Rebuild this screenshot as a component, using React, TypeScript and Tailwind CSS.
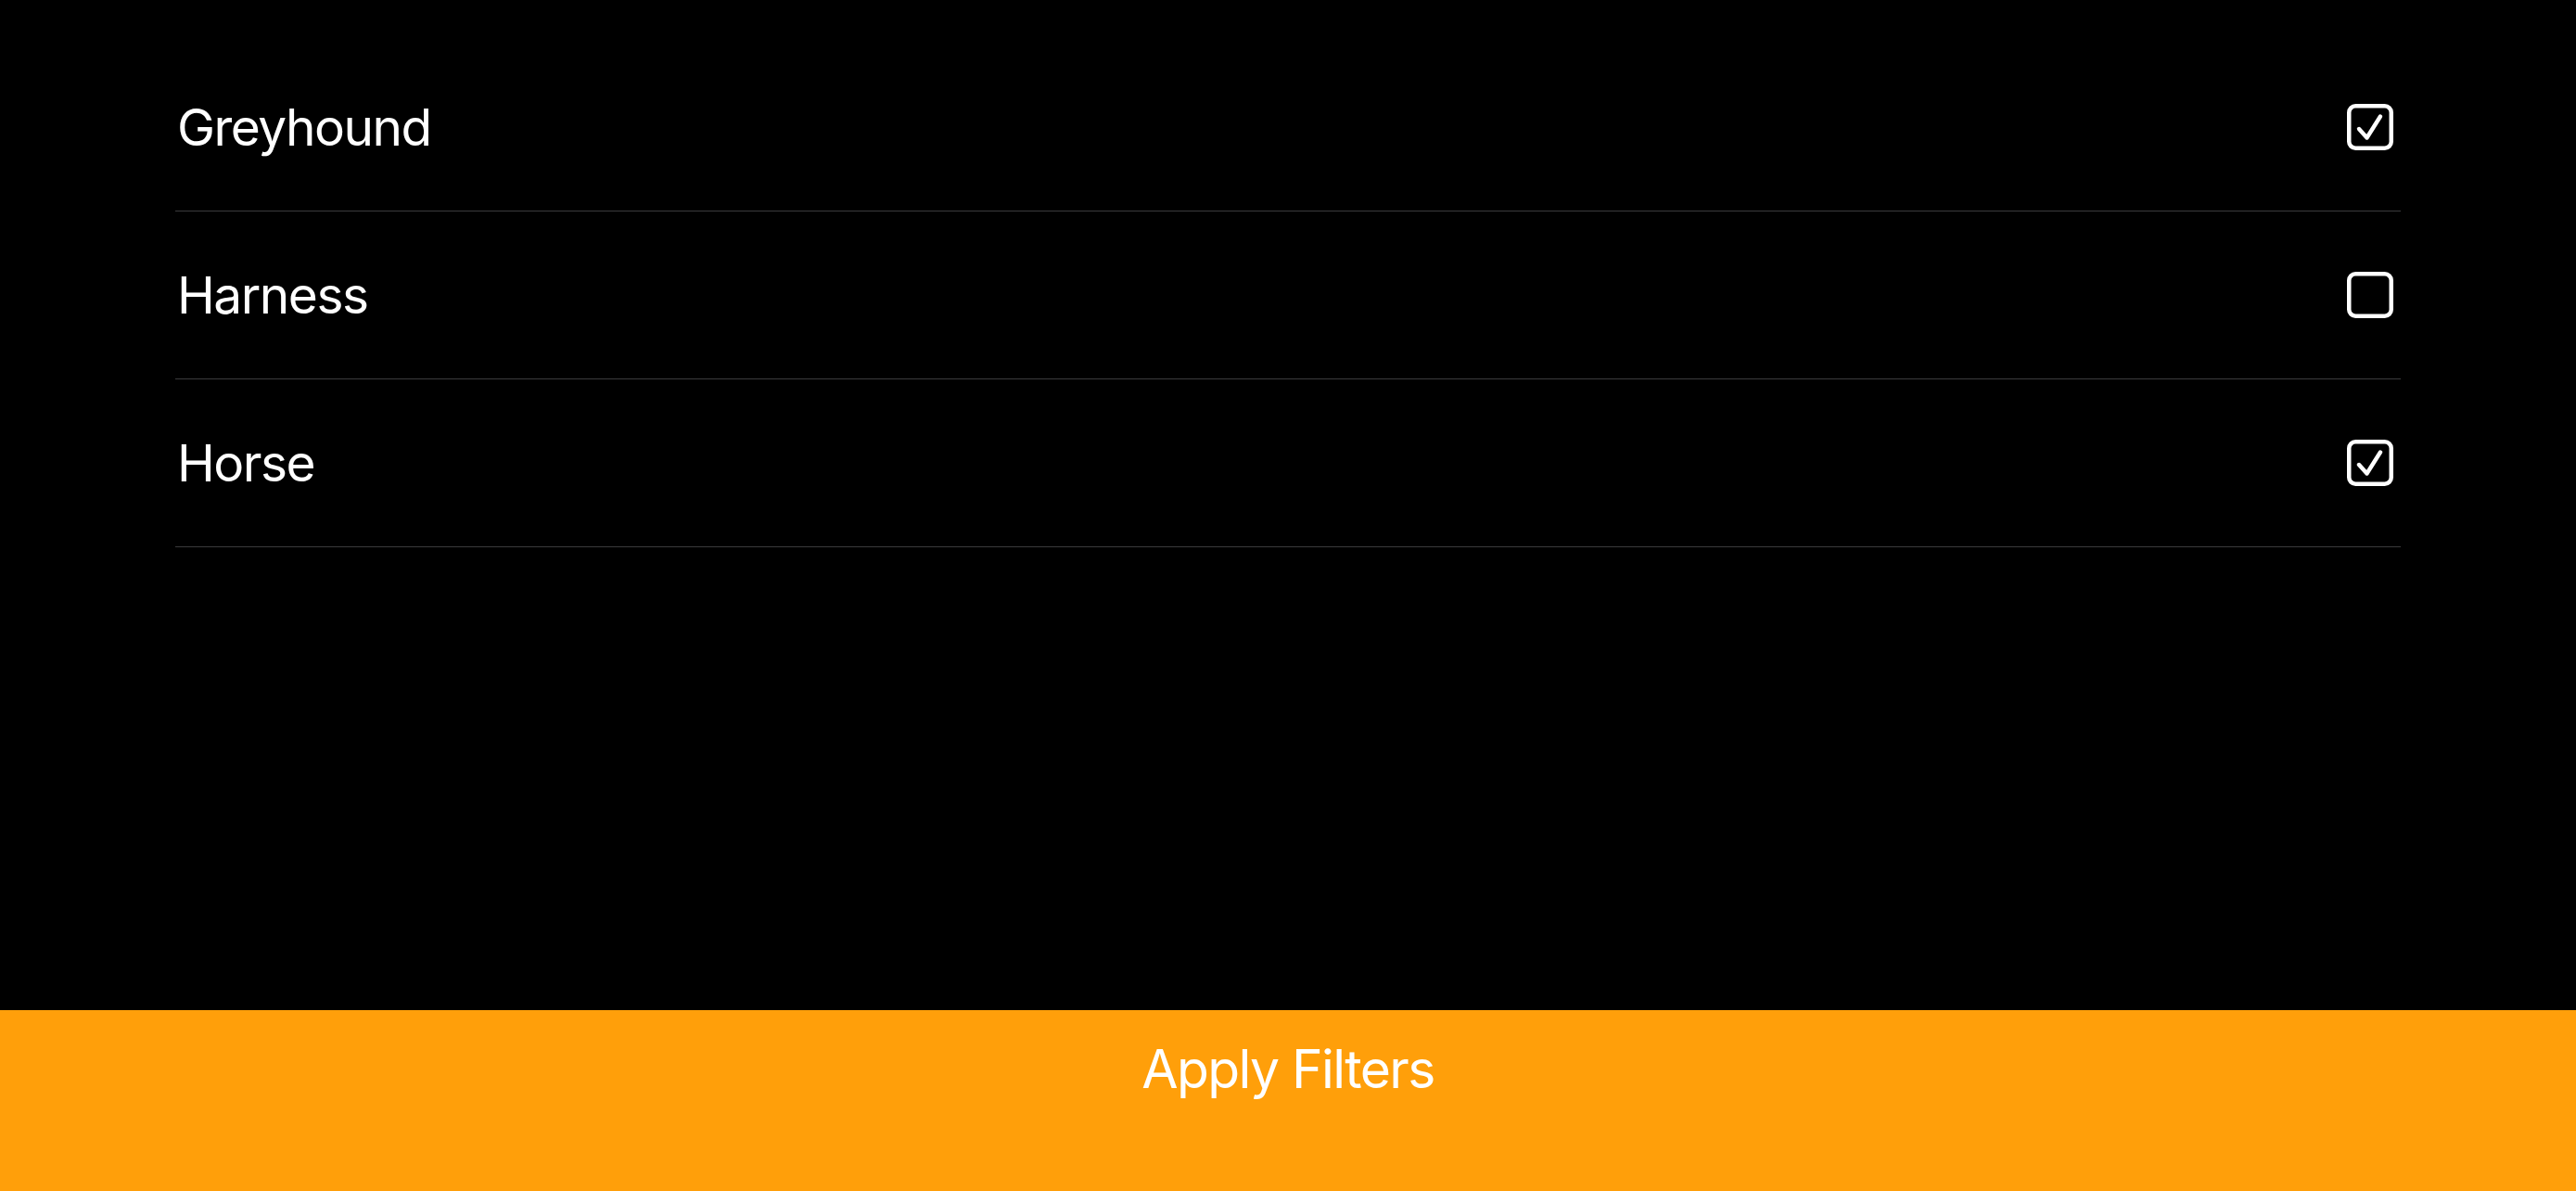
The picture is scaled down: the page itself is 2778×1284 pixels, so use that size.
import React from 'react';

const CheckBox: React.FC<{ checked: boolean }> = ({ checked }) => (
  <svg width="50" height="50" viewBox="0 0 50 50" fill="none" stroke="white" strokeLinecap="round" strokeLinejoin="round">
    <rect x="2.25" y="2.25" width="45.5" height="45.5" rx="7" strokeWidth="4.5" />
    {checked && <path d="M13 27 L21.5 36.5 L36 13.5" strokeWidth="4.4" />}
  </svg>
);

const App: React.FC = () => {
  // Filter options
  const options = [
    { name: 'Greyhound', checked: true },
    { name: 'Harness', checked: false },
    { name: 'Horse', checked: true }
  ];

  return (
    <div className="flex flex-col h-screen w-full bg-black font-['Inter','Noto_Sans',sans-serif] text-white">
      <div className="flex-1 px-[189px] pt-[47px]">
        {options.map((opt) => (
          <div
            key={opt.name}
            className="flex h-[181px] items-center justify-between border-b border-[#3a3a3c] pl-[2px] pr-[8px]"
          >
            <span className="text-[55px] leading-none tracking-[-1.5px]">{opt.name}</span>
            <CheckBox checked={opt.checked} />
          </div>
        ))}
      </div>
      <button className="h-[195px] w-full bg-[#ff9f0a] pb-[68px] pt-0 text-center text-[57px] leading-none tracking-[-1.6px] text-white">
        Apply Filters
      </button>
    </div>
  );
};

export default App;
